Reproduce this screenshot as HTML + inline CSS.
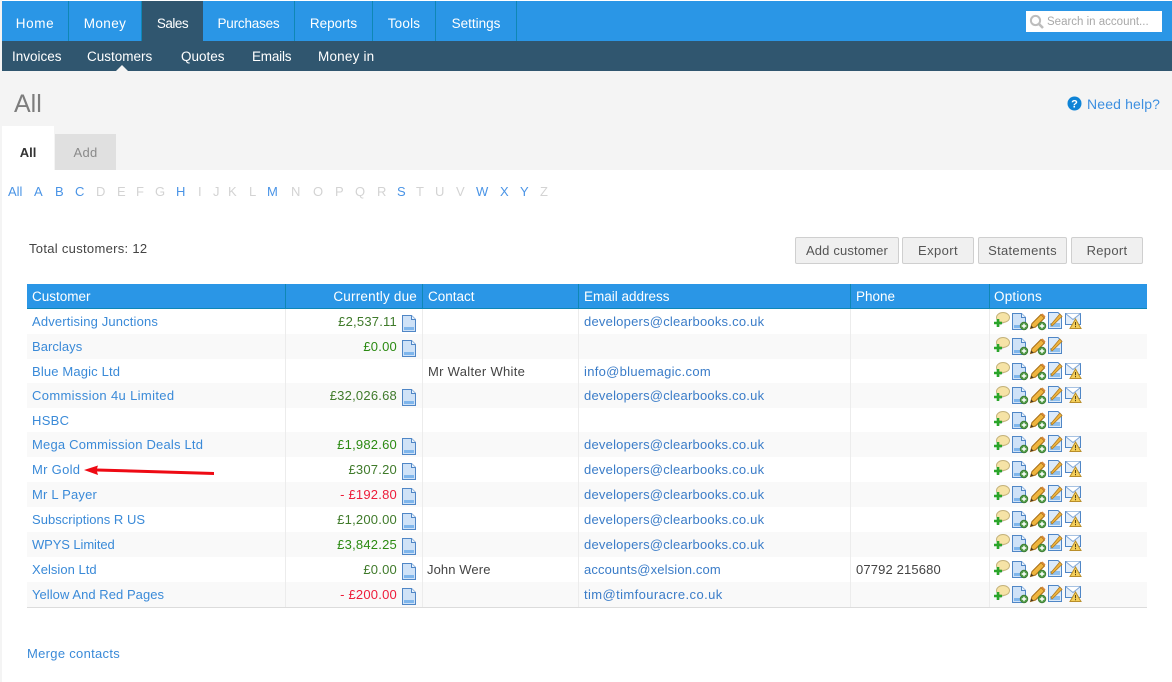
<!DOCTYPE html>
<html><head><meta charset="utf-8"><title>Customers</title>
<style>
html,body{margin:0;padding:0;background:#fff}
body{width:1172px;height:682px;overflow:hidden;position:relative;font-family:"Liberation Sans",sans-serif;font-size:13px;color:#444}
.a{position:absolute;white-space:nowrap}
.b{position:absolute}
.nav{top:1px;height:40px;line-height:45px;color:#fff;font-size:13.5px;text-align:center;background:#2a96e6;border-right:1px solid #0f87b5;box-sizing:content-box}
.sub{top:41px;height:30px;line-height:31px;color:#fff;font-size:13.5px}
.al{top:184px;line-height:16px;font-size:13px;color:#d3d3d3}
.al.on{color:#4a94e6}
.btn{position:absolute;top:237px;height:25px;line-height:25px;border:1px solid #cfcfcf;border-radius:2px;background:#f0f0f0;text-align:center;color:#555;font-size:13px;letter-spacing:.4px}
.th{top:284px;height:24px;line-height:25px;color:#fff;font-size:13.5px}
.sep{position:absolute;top:284px;width:1px;height:24px;background:#0f87b5}
.rs{position:absolute;left:27px;width:1120px;background:#f9f9f9}
.c{line-height:16px;letter-spacing:.3px;margin-top:1px}
.l{color:#3a8ad8}
.m{color:#3a7cc8;letter-spacing:.22px}
.r{right:775px;text-align:right;letter-spacing:.22px}
.g1{color:#3f7a2a}.g2{color:#2b8a12}.re{color:#ee1c3a}
.vl{position:absolute;top:309px;height:298px;width:1px;background:#ececec}
</style></head><body>
<div class="b" style="left:0;top:0;width:2px;height:682px;background:#f4f4f4"></div>
<div class="b" style="left:2px;top:1px;width:1170px;height:40px;background:#2a96e6"></div>
<div class="b" style="left:2px;top:41px;width:1170px;height:30px;background:#30566f"></div>
<div class="b" style="left:2px;top:71px;width:1170px;height:99px;background:#f4f4f4"></div>

<div class="a nav" style="left:2px;width:66px;letter-spacing:.6px">Home</div>
<div class="a nav" style="left:69px;width:72px;letter-spacing:.4px">Money</div>
<div class="a nav" style="left:142px;width:61px;background:#30566f;border-right:0;letter-spacing:-.5px">Sales</div>
<div class="a nav" style="left:203px;width:91px;letter-spacing:-.2px">Purchases</div>
<div class="a nav" style="left:295px;width:77px">Reports</div>
<div class="a nav" style="left:373px;width:62px;letter-spacing:.2px">Tools</div>
<div class="a nav" style="left:436px;width:80px">Settings</div>

<div class="a sub" style="left:12px">Invoices</div>
<div class="a sub" style="left:87px">Customers</div>
<div class="a sub" style="left:181px">Quotes</div>
<div class="a sub" style="left:252px;letter-spacing:-.2px">Emails</div>
<div class="a sub" style="left:318px;letter-spacing:.2px">Money in</div>
<div class="b" style="left:116px;top:65px;width:0;height:0;border-left:6px solid transparent;border-right:6px solid transparent;border-bottom:6px solid #f4f4f4"></div>

<div class="b" style="left:1026px;top:11px;width:136px;height:21px;background:#fff"></div>
<svg class="b" style="left:1029px;top:14px" width="16" height="16" viewBox="0 0 16 16"><circle cx="6.5" cy="6.5" r="4.6" fill="none" stroke="#bdbdbd" stroke-width="2"/><path d="M10 10l4 4" stroke="#bdbdbd" stroke-width="2.6"/></svg>
<div class="a" style="left:1047px;top:14px;line-height:16px;font-size:11.5px;color:#a8a8a8">Search in account...</div>

<div class="a" style="left:14px;top:88px;line-height:32px;font-size:25px;color:#7d7d7d">All</div>
<svg class="b" style="left:1067px;top:96px" width="15" height="15" viewBox="0 0 15 15"><circle cx="7.5" cy="7.5" r="7" fill="#0e83d6"/><text x="7.5" y="11.5" text-anchor="middle" font-family="Liberation Sans" font-weight="bold" font-size="11" fill="#fff">?</text></svg>
<div class="a" style="left:1087px;top:95px;line-height:18px;font-size:14px;color:#3d8fe0;letter-spacing:.15px">Need help?</div>

<div class="b" style="left:2px;top:126px;width:52px;height:44px;background:#fff"></div>
<div class="b" style="left:55px;top:134px;width:61px;height:36px;background:#e0e0e0"></div>
<div class="a" style="left:2px;width:52px;text-align:center;top:145px;line-height:16px;font-weight:bold;color:#333;font-size:13px">All</div>
<div class="a" style="left:55px;width:61px;text-align:center;top:145px;line-height:16px;color:#8a8a8a;font-size:13px;letter-spacing:.3px">Add</div>

<div class="a al on" style="left:8px">All</div>
<div class="a al on" style="left:34px">A</div>
<div class="a al on" style="left:55px">B</div>
<div class="a al on" style="left:75px">C</div>
<div class="a al" style="left:96px">D</div>
<div class="a al" style="left:117px">E</div>
<div class="a al" style="left:136px">F</div>
<div class="a al" style="left:155px">G</div>
<div class="a al on" style="left:176px">H</div>
<div class="a al" style="left:198px">I</div>
<div class="a al" style="left:213px">J</div>
<div class="a al" style="left:228px">K</div>
<div class="a al" style="left:249px">L</div>
<div class="a al on" style="left:267px">M</div>
<div class="a al" style="left:291px">N</div>
<div class="a al" style="left:313px">O</div>
<div class="a al" style="left:335px">P</div>
<div class="a al" style="left:355px">Q</div>
<div class="a al" style="left:377px">R</div>
<div class="a al on" style="left:397px">S</div>
<div class="a al" style="left:416px">T</div>
<div class="a al" style="left:435px">U</div>
<div class="a al" style="left:456px">V</div>
<div class="a al on" style="left:476px">W</div>
<div class="a al on" style="left:500px">X</div>
<div class="a al on" style="left:520px">Y</div>
<div class="a al" style="left:540px">Z</div>

<div class="a" style="left:29px;top:241px;line-height:16px;color:#444;letter-spacing:.3px">Total customers: 12</div>
<div class="btn" style="left:795px;width:102px;letter-spacing:.15px">Add customer</div>
<div class="btn" style="left:902px;width:70px">Export</div>
<div class="btn" style="left:978px;width:87px;letter-spacing:.3px">Statements</div>
<div class="btn" style="left:1071px;width:70px;letter-spacing:.3px">Report</div>

<!-- table -->
<div class="b" style="left:27px;top:284px;width:1120px;height:24px;background:#2a96e6;border-bottom:1px solid #0f87b5"></div>
<div class="sep" style="left:285px"></div><div class="sep" style="left:422px"></div><div class="sep" style="left:578px"></div><div class="sep" style="left:850px"></div><div class="sep" style="left:989px"></div>
<div class="a th" style="left:32px">Customer</div>
<div class="a th" style="right:755px;letter-spacing:.2px">Currently due</div>
<div class="a th" style="left:428px">Contact</div>
<div class="a th" style="left:584px">Email address</div>
<div class="a th" style="left:856px">Phone</div>
<div class="a th" style="left:994px;letter-spacing:.2px">Options</div>

<div class="rs" style="top:334px;height:25px"></div>
<div class="rs" style="top:383px;height:25px"></div>
<div class="rs" style="top:432px;height:25px"></div>
<div class="rs" style="top:482px;height:25px"></div>
<div class="rs" style="top:532px;height:25px"></div>
<div class="rs" style="top:582px;height:25px"></div>
<div class="vl" style="left:285px"></div><div class="vl" style="left:422px"></div><div class="vl" style="left:578px"></div><div class="vl" style="left:850px"></div><div class="vl" style="left:989px"></div>
<div class="b" style="left:27px;top:607px;width:1120px;height:1px;background:#dcdcdc"></div>

<div class="a c l" style="left:32px;top:313px;letter-spacing:.15px">Advertising Junctions</div>
<div class="a c l" style="left:32px;top:338px;letter-spacing:.05px">Barclays</div>
<div class="a c l" style="left:32px;top:363px;letter-spacing:.15px">Blue Magic Ltd</div>
<div class="a c l" style="left:32px;top:387px;letter-spacing:.35px">Commission 4u Limited</div>
<div class="a c l" style="left:32px;top:412px">HSBC</div>
<div class="a c l" style="left:32px;top:436px;letter-spacing:.2px">Mega Commission Deals Ltd</div>
<div class="a c l" style="left:32px;top:461px">Mr Gold</div>
<div class="a c l" style="left:32px;top:486px;letter-spacing:.2px">Mr L Payer</div>
<div class="a c l" style="left:32px;top:511px;letter-spacing:.02px">Subscriptions R US</div>
<div class="a c l" style="left:32px;top:536px;letter-spacing:-.1px">WPYS Limited</div>
<div class="a c l" style="left:32px;top:561px;letter-spacing:.03px">Xelsion Ltd</div>
<div class="a c l" style="left:32px;top:586px;letter-spacing:.05px">Yellow And Red Pages</div>

<div class="a c r g1" style="top:313px">£2,537.11</div>
<div class="a c r g2" style="top:338px">£0.00</div>
<div class="a c r g1" style="top:387px">£32,026.68</div>
<div class="a c r g2" style="top:436px">£1,982.60</div>
<div class="a c r g1" style="top:461px">£307.20</div>
<div class="a c r re" style="top:486px">- £192.80</div>
<div class="a c r g1" style="top:511px">£1,200.00</div>
<div class="a c r g2" style="top:536px">£3,842.25</div>
<div class="a c r g1" style="top:561px">£0.00</div>
<div class="a c r re" style="top:586px">- £200.00</div>

<div class="a c" style="left:428px;top:363px">Mr Walter White</div>
<div class="a c" style="left:427px;top:561px;letter-spacing:.1px">John Were</div>

<div class="a c m" style="left:584px;top:313px">developers@clearbooks.co.uk</div>
<div class="a c m" style="left:584px;top:363px;letter-spacing:.3px">info@bluemagic.com</div>
<div class="a c m" style="left:584px;top:387px">developers@clearbooks.co.uk</div>
<div class="a c m" style="left:584px;top:436px">developers@clearbooks.co.uk</div>
<div class="a c m" style="left:584px;top:461px">developers@clearbooks.co.uk</div>
<div class="a c m" style="left:584px;top:486px">developers@clearbooks.co.uk</div>
<div class="a c m" style="left:584px;top:511px">developers@clearbooks.co.uk</div>
<div class="a c m" style="left:584px;top:536px">developers@clearbooks.co.uk</div>
<div class="a c m" style="left:584px;top:561px;letter-spacing:.15px">accounts@xelsion.com</div>
<div class="a c m" style="left:584px;top:586px;letter-spacing:.4px">tim@timfouracre.co.uk</div>
<div class="a c" style="left:856px;top:561px;letter-spacing:.15px">07792 215680</div>

<div class="a c l" style="left:27px;top:645px">Merge contacts</div>

<svg class="b" style="left:0;top:0" width="1172" height="682" viewBox="0 0 1172 682">
<defs>
<g id="doc"><path d="M.5.5h9l4 4v12H.5z" fill="#cfe2f7" stroke="#4f86c6"/><path d="M2 12h10v3H2z" fill="#7fb6ec"/><path d="M9.500.5v4h4" fill="#eaf3fc" stroke="#4f86c6"/></g>
<g id="talk"><path d="M6 11l-1 3 5-3z" fill="#ccc"/><ellipse cx="9" cy="5.500" rx="6.500" ry="5" fill="#f6e3a6" stroke="#c4b27a"/><path d="M0 11h8M4 7v8" stroke="#2aa52a" stroke-width="2.600"/></g>
<g id="dplus"><path d="M.5.5h9l4 4v12H.5z" fill="#cfe2f7" stroke="#4f86c6"/><path d="M2 12h8v3H2z" fill="#7fb6ec"/><path d="M9.500.5v4h4" fill="#eaf3fc" stroke="#4f86c6"/><circle cx="12" cy="13" r="3.800" fill="#4f9a45" stroke="#3c7a32" stroke-width=".8"/><path d="M9.700 13h4.600M12 10.700v4.600" stroke="#fff" stroke-width="1.400"/></g>
<g id="pen"><path d="M.5 15.500l1.500-5L11 1.500 14.500 5l-9 9z" fill="#efb53e" stroke="#a66d16"/><path d="M.5 15.500l.8-3 2.300 2.200z" fill="#4a3a20"/><path d="M11 1.500L12.500.5 15.500 3.500 14.500 5z" fill="#d8893a"/><circle cx="12" cy="13" r="3.800" fill="#4f9a45" stroke="#3c7a32" stroke-width=".8"/><path d="M9.700 13h4.600M12 10.700v4.600" stroke="#fff" stroke-width="1.400"/></g>
<g id="edit"><path d="M.5.5h9.500l3.500 3.500v12.500H.5z" fill="#dcebfa" stroke="#4f86c6"/><path d="M2 11h10v4H2z" fill="#8fc0ee"/><path d="M3 12.500l1 1.500 10-9.500-2.200-2.500z" fill="#efb53e" stroke="#b07a20" stroke-width=".8"/></g>
<g id="mail"><path d="M.5.500h15v11H.5z" fill="#e3eefa" stroke="#4f86c6"/><path d="M.5.500l7.500 6 7.500-6" fill="#fff" stroke="#7fa6d6"/><path d="M10.500 6l5.500 9.500H5z" fill="#f4cf5a" stroke="#b98e2a"/><path d="M10.500 9v3.200M10.500 13v1.300" stroke="#5c4510" stroke-width="1"/></g>
<g id="opt"><use href="#talk"/><use href="#dplus" x="18" y="1"/><use href="#pen" x="36" y="1"/><use href="#edit" x="54" y="0"/></g>
<g id="optm"><use href="#opt"/><use href="#mail" x="71" y="1"/></g>
</defs>
<!-- doc icons -->
<use href="#doc" x="402" y="315"/><use href="#doc" x="402" y="340"/><use href="#doc" x="402" y="389"/><use href="#doc" x="402" y="438"/><use href="#doc" x="402" y="463"/><use href="#doc" x="402" y="488"/><use href="#doc" x="402" y="513"/><use href="#doc" x="402" y="538"/><use href="#doc" x="402" y="563"/><use href="#doc" x="402" y="588"/>
<!-- options -->
<use href="#optm" x="994" y="312"/>
<use href="#opt" x="994" y="337"/>
<use href="#optm" x="994" y="362"/>
<use href="#optm" x="994" y="386"/>
<use href="#opt" x="994" y="411"/>
<use href="#optm" x="994" y="435"/>
<use href="#optm" x="994" y="460"/>
<use href="#optm" x="994" y="485"/>
<use href="#optm" x="994" y="510"/>
<use href="#optm" x="994" y="534"/>
<use href="#optm" x="994" y="560"/>
<use href="#optm" x="994" y="585"/>
<!-- arrow -->
<path d="M84 470l14-4.500-1 3 117 3.500v3L97 471.500l1 3.500z" fill="#ee0a14"/>
</svg>
</body></html>
